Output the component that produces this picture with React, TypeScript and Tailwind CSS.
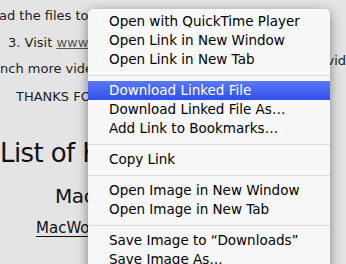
import React from 'react';

type Entry = { label: string; active?: boolean } | 'sep';

const entries: Entry[] = [
    { label: 'Open with QuickTime Player' },
    { label: 'Open Link in New Window' },
    { label: 'Open Link in New Tab' },
    'sep',
    { label: 'Download Linked File', active: true },
    { label: 'Download Linked File As…' },
    { label: 'Add Link to Bookmarks…' },
    'sep',
    { label: 'Copy Link' },
    'sep',
    { label: 'Open Image in New Window' },
    { label: 'Open Image in New Tab' },
    'sep',
    { label: 'Save Image to “Downloads”' },
    { label: 'Save Image As…' },
];

const ContextMenu: React.FC = () => (
    <div className="absolute left-[88px] top-[9px] w-[242px] h-[300px] bg-[#f8f8f8] rounded-t-[5px] shadow-[0_3px_12px_rgba(0,0,0,0.45)] pt-[3px] font-['DejaVu_Sans',sans-serif] text-[13.5px] text-black">
        {entries.map((entry, i) =>
            entry === 'sep' ? (
                <div key={i} className="h-[12px] flex items-center">
                    <div className="h-px w-full bg-[#dadada]" />
                </div>
            ) : (
                <div
                    key={i}
                    className={`h-[19px] flex items-center pl-[21px] whitespace-nowrap ${entry.active ? 'bg-gradient-to-b from-[#5b78f6] to-[#2f4fea] text-white' : ''}`}
                >
                    {entry.label}
                </div>
            )
        )}
    </div>
);

const App: React.FC = () => {
    return (
        <div className="relative w-[346px] h-[264px] overflow-hidden bg-[#e4e4e4] text-[#1c1c1c] font-['DejaVu_Sans',sans-serif]">
            <div className="flex flex-col whitespace-nowrap">
                <div className="h-[15px] mt-[8px] text-[13px] leading-[15px] -ml-[1px]">ad the files to your computer</div>
                <div className="h-[15px] mt-[12px] text-[13px] leading-[15px] ml-[8px]">
                    3. Visit <span className="underline text-[#555]">www.apple.com</span>
                </div>
                <div className="h-[15px] mt-[11px] text-[13px] leading-[15px] flex justify-between">
                    <span>nch more videos</span>
                    <span className="-mt-[8px]">vid</span>
                </div>
                <div className="h-[15px] mt-[13px] text-[13px] leading-[15px] ml-[16px]">THANKS FOR WATCHING</div>
                <div className="h-[30px] mt-[34px] text-[26px] leading-[30px] tracking-[-0.6px] text-[#111]">List of Keynotes</div>
                <div className="h-[24px] mt-[16px] text-[20px] leading-[24px] ml-[55px] tracking-[-0.4px] text-[#111]">Macworld</div>
                <div className="h-[18px] mt-[11px] text-[15px] leading-[18px] ml-[36px] underline underline-offset-[3px] text-[#111]">MacWorld 2008</div>
            </div>
            <ContextMenu />
        </div>
    );
};

export default App;
